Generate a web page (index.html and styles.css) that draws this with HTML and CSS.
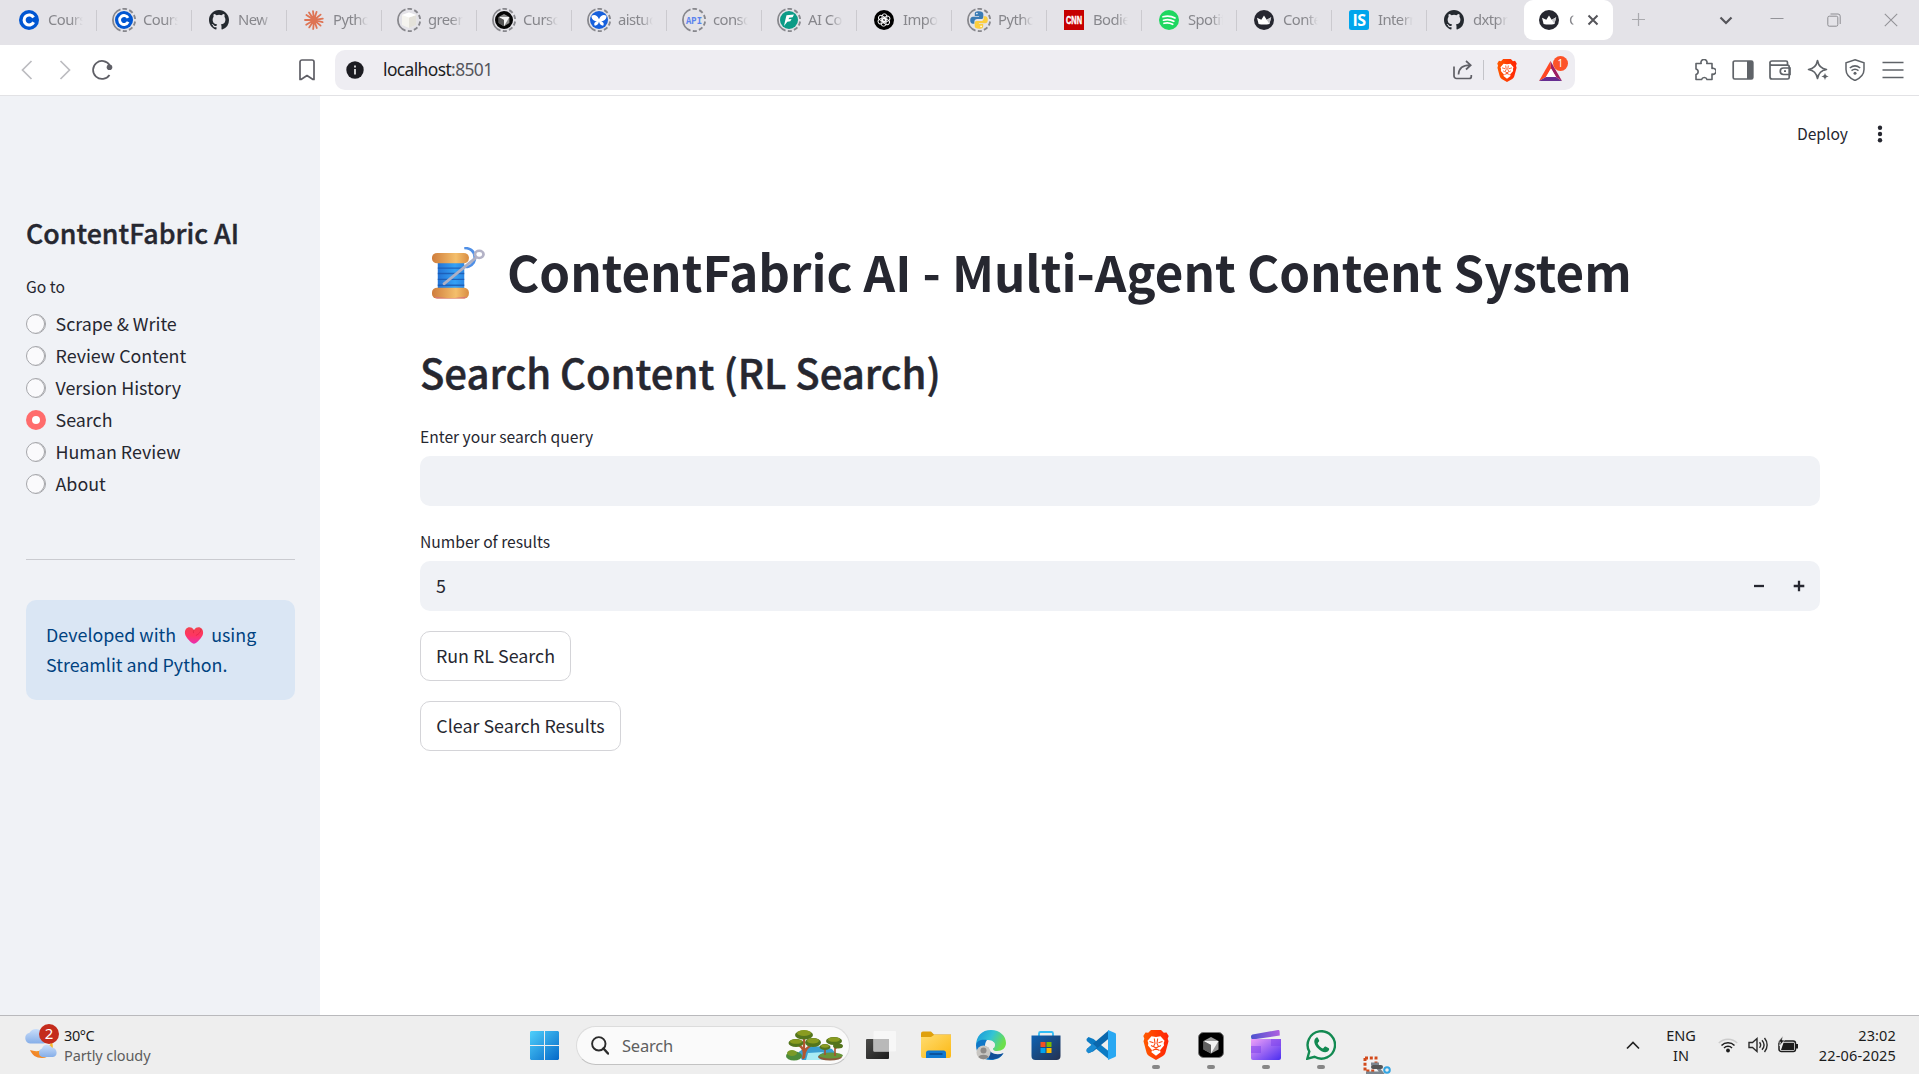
FILE: index.html
```html
<!DOCTYPE html>
<html lang="en">
<head>
<meta charset="utf-8">
<title>ContentFabric AI</title>
<link rel="stylesheet" href="styles.css">
</head>
<body>
<svg class="defs" width="0" height="0" aria-hidden="true">
  <defs>
    <linearGradient id="gWin" x1="0" y1="0" x2="1" y2="1"><stop offset="0" stop-color="#4fd0fb"/><stop offset="1" stop-color="#0568c8"/></linearGradient>
    <linearGradient id="gFold" x1="0" y1="0" x2="1" y2="1"><stop offset="0" stop-color="#ffdc70"/><stop offset="1" stop-color="#fcb813"/></linearGradient>
    <linearGradient id="gDark" x1="0" y1="0" x2="1" y2="1"><stop offset="0" stop-color="#4b4b49"/><stop offset="1" stop-color="#1d1d1d"/></linearGradient>
    <linearGradient id="gEdge" x1="0" y1="0" x2="1" y2=".4"><stop offset="0" stop-color="#1693dc"/><stop offset=".55" stop-color="#34c4d4"/><stop offset="1" stop-color="#6cdf4c"/></linearGradient>
    <linearGradient id="gStore" x1="0" y1="0" x2="1" y2="1"><stop offset="0" stop-color="#0d62b4"/><stop offset="1" stop-color="#253150"/></linearGradient>
    <linearGradient id="gBrave" x1="0" y1="0" x2="1" y2="0"><stop offset="0" stop-color="#ff5a00"/><stop offset="1" stop-color="#ff2306"/></linearGradient>
    <linearGradient id="gClip" x1="0" y1="0" x2="1" y2="1"><stop offset="0" stop-color="#efa0f8"/><stop offset="1" stop-color="#4a2ef0"/></linearGradient>
    <linearGradient id="gClipTop" x1="0" y1="0" x2="1" y2="0"><stop offset="0" stop-color="#4b52cf"/><stop offset="1" stop-color="#b060e0"/></linearGradient>
    <linearGradient id="gWood" x1="0" y1="0" x2="1" y2="0"><stop offset="0" stop-color="#cf7d3c"/><stop offset=".65" stop-color="#f4bf6c"/><stop offset="1" stop-color="#d98d42"/></linearGradient>
    <linearGradient id="gThread" x1="0" y1="0" x2="1" y2="0"><stop offset="0" stop-color="#2373d6"/><stop offset=".65" stop-color="#35a2f5"/><stop offset="1" stop-color="#2b86e4"/></linearGradient>
    <linearGradient id="gHeart" x1=".5" y1="0" x2=".5" y2="1"><stop offset="0" stop-color="#f2434f"/><stop offset=".5" stop-color="#ff3562"/><stop offset="1" stop-color="#e82fb5"/></linearGradient>
    <linearGradient id="gCloud" x1="0" y1="0" x2="0" y2="1"><stop offset="0" stop-color="#c9defa"/><stop offset="1" stop-color="#86aee8"/></linearGradient>
    <linearGradient id="gMoon" x1="1" y1="0" x2="0" y2="1"><stop offset="0" stop-color="#fbc32a"/><stop offset="1" stop-color="#ee7427"/></linearGradient>
  </defs>
  <symbol id="ring" viewBox="0 0 24 24"><g fill="none" stroke="#88888d" stroke-width="1.8"><path d="M8.5 22.6A11.2 11.2 0 0 1 8.5 1.4"/><path d="M10.5 .9a11.2 11.2 0 0 1 4.500 .3M17.2 2.100a11.2 11.2 0 0 1 3.400 2.800M21.900 7a11.200 11.200 0 0 1 1.200 4M23.100 13.500a11.200 11.200 0 0 1-1.400 4M20.400 19.300a11.200 11.200 0 0 1-3.500 2.600M14.800 22.800a11.200 11.200 0 0 1-4 .2"/></g></symbol>
  <symbol id="coursera" viewBox="0 0 20 20"><circle cx="10" cy="10" r="10" fill="#0056d2"/><path d="M14.6 12.2A5 5 0 1 1 14.5 7.6" fill="none" stroke="#fff" stroke-width="3.1"/></symbol>
  <symbol id="github" viewBox="0 0 16 16"><path fill="#24292f" d="M8 0C3.58 0 0 3.58 0 8c0 3.54 2.29 6.53 5.47 7.59.4.07.55-.17.55-.38 0-.19-.01-.82-.01-1.49-2.01.37-2.53-.49-2.69-.94-.09-.23-.48-.94-.82-1.13-.28-.15-.68-.52-.01-.53.63-.01 1.08.58 1.23.82.72 1.21 1.87.87 2.33.66.07-.52.28-.87.51-1.07-1.78-.2-3.64-.89-3.64-3.95 0-.87.31-1.59.82-2.15-.08-.2-.36-1.02.08-2.12 0 0 .67-.21 2.2.82a7.6 7.6 0 0 1 4 0c1.53-1.04 2.2-.82 2.2-.82.44 1.1.16 1.92.08 2.12.51.56.82 1.27.82 2.15 0 3.07-1.87 3.75-3.65 3.95.29.25.54.73.54 1.48 0 1.07-.01 1.93-.01 2.2 0 .21.15.46.55.38A8 8 0 0 0 16 8c0-4.42-3.58-8-8-8z"/></symbol>
  <symbol id="claude" viewBox="0 0 20 20"><g stroke="#de7454" stroke-width="1.8" stroke-linecap="round"><path d="M10 10 9 1.2M10 10l2.6-8.2M10 10l6.6-5.4M10 10l8.8-1.4M10 10l8.6 2.2M10 10l6.6 5.6M10 10l2.8 8M10 10 9.2 19M10 10l-4.8 7.4M10 10l-7.8 4.8M10 10 1 10M10 10 2.4 5M10 10 5 2.4"/></g></symbol>
  <symbol id="cube" viewBox="0 0 20 20"><path d="m3 5 7-2.6L17.2 5v10L10 18 3 15z" fill="#f5f4ef"/><path d="m10 7.6 7.2-2.6v10L10 18z" fill="#e4e2da"/><path d="m3 5 7-2.6L17.2 5 10 7.6z" fill="#fff"/></symbol>
  <symbol id="cursor" viewBox="0 0 20 20"><circle cx="10" cy="10" r="9" fill="#050505"/><path d="m10 4 5.4 2.9v6.2L10 16.2l-5.4-3.1V6.900z" fill="#8c8c8c"/><path d="M4.600 6.900h10.800L10 16.200v-6.100z" fill="#f4f4f4"/><path d="m4.600 6.900 5.400 3.200v6.100l-5.400-3.100z" fill="#555"/></symbol>
  <symbol id="aistu" viewBox="0 0 20 20"><circle cx="10" cy="10" r="9" fill="#1660dc"/><path d="M2.500 6.200c2-2.200 5.600-1.600 7.500 3 1.900-4.600 5.500-5.200 7.500-3-.2 3.200-2.600 5-5.700 5 2.600.6 3.800 2.600 2.300 4.600-2.200-.2-3.600-1.700-4.100-4.200-.5 2.500-1.900 4-4.100 4.200-1.500-2-.3-4 2.300-4.600-3.100 0-5.500-1.800-5.700-5z" fill="#fff"/></symbol>
  <symbol id="aico" viewBox="0 0 20 20"><circle cx="10" cy="10" r="9" fill="#0b9b86"/><path d="M7.500 5.300 15 4.500l-1.400 2.700-3.500.5-.5 1.500 3-.3-1.300 2.400-3 .5L5 16l1.200-5.400z" fill="#fff"/></symbol>
  <symbol id="gpt" viewBox="0 0 20 20"><circle cx="10" cy="10" r="10" fill="#000"/><g fill="none" stroke="#fff" stroke-width=".9"><rect x="8" y="3.800" width="4.800" height="7.600" rx="2.400"/><rect x="8" y="3.800" width="4.800" height="7.600" rx="2.400" transform="rotate(60 10 10)"/><rect x="8" y="3.800" width="4.800" height="7.600" rx="2.400" transform="rotate(120 10 10)"/><rect x="8" y="3.800" width="4.800" height="7.600" rx="2.400" transform="rotate(180 10 10)"/><rect x="8" y="3.800" width="4.800" height="7.600" rx="2.400" transform="rotate(240 10 10)"/><rect x="8" y="3.800" width="4.800" height="7.600" rx="2.400" transform="rotate(300 10 10)"/></g></symbol>
  <symbol id="python" viewBox="0 0 20 20"><path d="M9.800 1.200c-3.600 0-4 1.300-4 2.800v2h4.300v.7H4C2.200 6.700 1.200 8 1.200 10.300s1 3.500 2.600 3.500h1.600v-2.200c0-1.600 1.200-2.600 2.700-2.600h4.200c1.200 0 2-.9 2-2.100V4c0-1.700-1.400-2.800-4.500-2.800z" fill="#3b7bb4"/><path d="M10.200 18.800c3.600 0 4-1.300 4-2.800v-2H9.900v-.7H16c1.800 0 2.800-1.300 2.800-3.600s-1-3.500-2.600-3.500h-1.600v2.200c0 1.600-1.200 2.600-2.700 2.600H7.700c-1.200 0-2 .9-2 2.100V16c0 1.700 1.400 2.800 4.500 2.800z" fill="#fcce3e"/><circle cx="7.900" cy="3.600" r=".8" fill="#fff"/><circle cx="12.100" cy="16.400" r=".8" fill="#fff"/></symbol>
  <symbol id="spotify" viewBox="0 0 20 20"><circle cx="10" cy="10" r="10" fill="#1ed760"/><path d="M4 6.800c4.200-1.100 8.400-.7 12 1.300M4.500 10.200c3.700-1 7.200-.6 10.300 1.100M5 13.300c3-.8 6-.5 8.700 1" fill="none" stroke="#fff" stroke-linecap="round" stroke-width="1.700"/></symbol>
  <symbol id="crown" viewBox="0 0 20 20"><circle cx="10" cy="10" r="10" fill="#262730"/><path d="m3 7.800 4.300 1.900L10 5.600l2.700 4.100L17.200 7.200l-1.800 6.700c-3 .8-7.800.8-10.800 0z" fill="#fff"/><path d="m10 5.600 2.700 4.100 4.500-2.500-1.800 6.700z" fill="#c5c5c9"/></symbol>
  <symbol id="brave" viewBox="0 0 26 30"><path d="m8 0h10l2.800 2.800 2.700-.4 2.200 3.600-1 2.700.8 2.600-3 11.200c-.4 1.500-1.300 2.700-2.600 3.500L13 30l-6.900-4c-1.300-.8-2.200-2-2.600-3.500L.5 11.300l.8-2.600-1-2.700 2.200-3.600 2.700.4z" fill="url(#gBrave)"/><path d="m8.500 6.200 4.500.8 4.500-.8 4 4.500-.8 2.300 .3 2.500-4 4.800.6 2-4.600 3.400-4.600-3.400.6-2-4-4.800.3-2.500-.8-2.300z" fill="#fff"/><path d="m6.500 11.500 4 1.200M19.500 11.500l-4 1.200M11.300 8.500l.7 5-1.500 3L13 18l2.500-1.500-1.500-3 .7-5M8 15.500l2 1M18 15.500l-2 1M9.500 20.500 13 18.700l3.500 1.800M13 18v2" fill="none" stroke="#fb4a14" stroke-width="1.100"/></symbol>
</svg>

<header class="tabstrip">
  <div class="tab"><span class="fav"><svg class="ico"><use href="#coursera"/></svg></span><span class="tab-text">Cours</span></div>
  <div class="tab"><span class="fav"><svg class="ring"><use href="#ring"/></svg><svg class="ico small"><use href="#coursera"/></svg></span><span class="tab-text">Cours</span></div>
  <div class="tab"><span class="fav"><svg class="ico"><use href="#github"/></svg></span><span class="tab-text">New</span></div>
  <div class="tab"><span class="fav"><svg class="ico"><use href="#claude"/></svg></span><span class="tab-text">Pytho</span></div>
  <div class="tab"><span class="fav"><svg class="ring"><use href="#ring"/></svg><svg class="ico"><use href="#cube"/></svg></span><span class="tab-text">green</span></div>
  <div class="tab"><span class="fav"><svg class="ring"><use href="#ring"/></svg><svg class="ico"><use href="#cursor"/></svg></span><span class="tab-text">Curso</span></div>
  <div class="tab"><span class="fav"><svg class="ring"><use href="#ring"/></svg><svg class="ico"><use href="#aistu"/></svg></span><span class="tab-text">aistuc</span></div>
  <div class="tab"><span class="fav"><svg class="ring"><use href="#ring"/></svg><svg class="ico" viewBox="0 0 20 20"><text x="10" y="14" class="api-text" text-anchor="middle" textLength="16" lengthAdjust="spacingAndGlyphs">API</text></svg></span><span class="tab-text">conso</span></div>
  <div class="tab"><span class="fav"><svg class="ring"><use href="#ring"/></svg><svg class="ico"><use href="#aico"/></svg></span><span class="tab-text">AI Co</span></div>
  <div class="tab"><span class="fav"><svg class="ico"><use href="#gpt"/></svg></span><span class="tab-text">Impo</span></div>
  <div class="tab"><span class="fav"><svg class="ring"><use href="#ring"/></svg><svg class="ico"><use href="#python"/></svg></span><span class="tab-text">Pytho</span></div>
  <div class="tab"><span class="fav"><svg class="ico" viewBox="0 0 20 20"><path d="M0 0h20v20H0z" fill="#c60000"/><text x="10" y="13.700" text-anchor="middle" class="cnn-text" textLength="16" lengthAdjust="spacingAndGlyphs">CNN</text></svg></span><span class="tab-text">Bodie</span></div>
  <div class="tab"><span class="fav"><svg class="ico"><use href="#spotify"/></svg></span><span class="tab-text">Spotif</span></div>
  <div class="tab"><span class="fav"><svg class="ico"><use href="#crown"/></svg></span><span class="tab-text">Conte</span></div>
  <div class="tab"><span class="fav"><svg class="ico" viewBox="0 0 20 20"><rect width="20" height="20" rx="2.500" fill="#00a5ec"/><text x="10" y="15.600" text-anchor="middle" class="is-text">IS</text></svg></span><span class="tab-text">Intern</span></div>
  <div class="tab last"><span class="fav"><svg class="ico"><use href="#github"/></svg></span><span class="tab-text">dxtpr</span></div>
  <div class="tab active"><span class="fav"><svg class="ico"><use href="#crown"/></svg></span><span class="tab-text">C</span><svg class="close" viewBox="0 0 12 12"><path d="m1.500 1.500 9 9m0-9-9 9" stroke="#55555a" stroke-width="2"/></svg></div>
  <svg class="plus" viewBox="0 0 14 14"><path d="M7 0v14M0 7h14" stroke="#aaaaae" stroke-width="1.300"/></svg>
  <div class="winctl">
    <svg width="14" height="9" viewBox="0 0 14 9"><path d="m1.500 1.500 5.500 5.500 5.500-5.500" fill="none" stroke="#55555a" stroke-width="2.200"/></svg>
    <svg width="14" height="14" viewBox="0 0 14 14"><path d="M.5 5.500h13" stroke="#939398"/></svg>
    <svg width="14" height="14" viewBox="0 0 14 14"><g fill="none" stroke="#8d8d92"><rect x=".8" y="3.200" width="10" height="10" rx="1.500"/><path d="M3.500 1h7.500a2.200 2.200 0 0 1 2.200 2.200V11"/></g></svg>
    <svg width="14" height="14" viewBox="0 0 14 14"><path d="m.8.8 12.400 12.400m0-12.400L.8 13.200" stroke="#939398" stroke-width="1.100"/></svg>
  </div>
</header>

<nav class="toolbar">
  <svg class="back" width="12" height="20" viewBox="0 0 12 20"><path d="M10.500 1 1.500 10l9 9" fill="none" stroke="#bcbcc0" stroke-width="1.700"/></svg>
  <svg class="fwd" width="12" height="20" viewBox="0 0 12 20"><path d="m1.500 1 9 9-9 9" fill="none" stroke="#bcbcc0" stroke-width="1.700"/></svg>
  <svg class="reload" width="22" height="22" viewBox="0 0 22 22"><path d="M18.700 6.200A9 9 0 1 0 18.500 16" fill="none" stroke="#5f5f66" stroke-width="1.700"/><circle cx="18.500" cy="8.200" r="2.800" fill="#5f5f66"/></svg>
  <svg class="bookmark" width="16" height="22" viewBox="0 0 16 22"><path d="M3 1h10a2 2 0 0 1 2 2v17.500h-1L8 16.500l-6 4H1V3a2 2 0 0 1 2-2z" fill="none" stroke="#5f5f66" stroke-width="1.700" stroke-linejoin="round"/></svg>
  <div class="url">
    <svg width="18" height="18" viewBox="0 0 18 18"><circle cx="9" cy="9" r="8.700" fill="#1c1c22"/><path d="M9 8v5.500M9 4.500v2" stroke="#eee" stroke-width="1.700"/></svg>
    <span class="address">localhost<span>:8501</span></span>
    <svg class="share" width="20" height="20" viewBox="0 0 20 20"><path d="M1 6.500V16a2.500 2.500 0 0 0 2.500 2.500h12.800a2 2 0 0 0 2-2V15M5.500 14.500C5.800 8.600 9.500 5.200 17 5.200M13 1l4.700 4.200L13 9.500" fill="none" stroke="#5f5f66" stroke-width="1.700"/></svg>
    <i class="bar"></i>
    <svg class="lion" width="20" height="23"><use href="#brave"/></svg>
    <svg class="bat" width="30" height="26" viewBox="0 0 30 26"><path d="M11.500 5 0 25l7-4 5-8.500z" fill="#ff4724"/><path d="M0 25h23l-6-4H7z" fill="#662d91"/><path d="M11.500 5 23 25l-6-4-5-8.500z" fill="#9e1f63"/><path d="m12 12.500-5 8.500h10z" fill="#fff"/><circle cx="21.500" cy="7.500" r="7.500" fill="#fd5228"/><text x="21.300" y="11" text-anchor="middle" class="badge-num">1</text></svg>
  </div>
  <div class="tools">
    <svg viewBox="0 0 22 22"><path d="M2 4.500h5.200a3 3 0 1 1 5.600 0H18v5a3 3 0 1 1 0 5.600v5.400h-5a2.800 2.800 0 0 0-5.400 0H2v-5a2.900 2.900 0 0 0 0-5.600z" fill="none" stroke="#5f6368" stroke-width="1.600" stroke-linejoin="round"/></svg>
    <svg viewBox="0 0 22 22"><rect x="1.200" y="2" width="19.600" height="18" rx="1.500" fill="none" stroke="#5f6368" stroke-width="1.700"/><path d="M15 2h6v18h-6z" fill="#5f6368"/></svg>
    <svg viewBox="0 0 22 22"><g fill="none" stroke="#5f6368" stroke-width="1.700"><path d="M18.500 6V3.500A1.500 1.500 0 0 0 17 2H3a2 2 0 0 0 0 4.200h15.500c1 0 1.700.7 1.700 1.700v10.600c0 1-.7 1.500-1.700 1.500H3a2 2 0 0 1-2-2V4"/><path d="M21 9h-6.500a3.200 3.200 0 0 0 0 6.500H21zM15 12.200h2"/></g></svg>
    <svg viewBox="0 0 22 22"><path d="M10.500 1.500c1 5.500 3.500 8.200 9 9-5.500.8-8 3.500-9 9-1-5.500-3.500-8.200-9-9 5.500-.8 8-3.500 9-9z" fill="none" stroke="#5f6368" stroke-width="1.600" stroke-linejoin="round"/><path d="M18 12.500v10M13 17.500h10" stroke="#fff" stroke-width="4"/><path d="M18 13.800c.4 2.300 1.300 3.300 3.700 3.700-2.400.4-3.300 1.300-3.700 3.700-.4-2.400-1.300-3.300-3.700-3.700 2.400-.4 3.300-1.400 3.700-3.700z" fill="#5f6368"/></svg>
    <svg viewBox="0 0 22 22"><g fill="none" stroke="#5f6368" stroke-width="1.500"><path d="m11 .8 9 3v6.700c0 4.700-3 8.300-9 11-6-2.700-9-6.300-9-11V3.800z"/><path d="M5.800 9c3.200-2.600 7.200-2.600 10.400 0M7.500 11.600c2.300-1.800 4.700-1.800 7 0"/></g><circle cx="11" cy="14.300" r="1.500" fill="#5f6368"/></svg>
    <svg viewBox="0 0 22 22"><path d="M.5 3.500h21M.5 11h21M.5 18.500h21" stroke="#5f6368" stroke-width="1.700"/></svg>
  </div>
</nav>

<div class="page">
  <aside class="sidebar">
    <h2 class="side-title">ContentFabric AI</h2>
    <div class="goto">Go to</div>
    <div class="radios">
      <label><i></i><span>Scrape &amp; Write</span></label>
      <label><i></i><span>Review Content</span></label>
      <label><i></i><span>Version History</span></label>
      <label class="on"><i></i><span>Search</span></label>
      <label><i></i><span>Human Review</span></label>
      <label><i></i><span>About</span></label>
    </div>
    <hr>
    <div class="info">
      <div>Developed with <svg class="heart" viewBox="0 0 20 18"><path d="M10 3.200C8 0 5 0 3.200.8.500 2 0 5.200.6 7.600c.8 3.200 4.400 7 7.400 9.400 1.500 1.100 2.500 1.100 4 0 3-2.400 6.600-6.200 7.400-9.400C20 5.200 19.500 2 16.800.8 15 0 12 0 10 3.200z" fill="url(#gHeart)"/><path d="M10 3.200c-.6 1.200-.7 2-.5 3.300M17 2c1 2-1 5-5 7" fill="none" stroke="#d3203e" stroke-width="1" opacity=".6"/></svg> using</div>
      <div>Streamlit and Python.</div>
    </div>
  </aside>
  <main class="main">
    <div class="appbar"><span>Deploy</span><svg width="6" height="18" viewBox="0 0 6 18"><g fill="#262730"><circle cx="3" cy="2.700" r="2.200"/><circle cx="3" cy="9" r="2.200"/><circle cx="3" cy="15.300" r="2.200"/></g></svg></div>
    <h1 class="title"><svg class="spool" viewBox="0 0 46 53" preserveAspectRatio="none"><path d="M28 1c8 0 11 8 8 15-2 4-6 5-9 4" fill="none" stroke="#4f8fe6" stroke-width="2.600"/><path d="M5 13h23v32H5z" fill="url(#gThread)"/><path d="M5 21.500h23M5 27h23M5 33h23M5 39h23" stroke="#1c57ae" stroke-width="1.400" opacity=".8"/><rect x="0" y="6" width="32" height="10.500" rx="4.500" fill="url(#gWood)"/><rect x="0" y="41.500" width="32" height="11" rx="4.500" fill="url(#gWood)"/><path d="M2 50.500c8 2 20 2 28 0l-1.500 2H4z" fill="#d9777a"/><path d="m10.500 37.500 27-26" stroke="#aeb0c4" stroke-width="2.600" stroke-linecap="round"/><circle cx="41" cy="7.500" r="3.700" fill="none" stroke="#b3b2c6" stroke-width="2.400"/></svg><span>ContentFabric AI - Multi-Agent Content System</span></h1>
    <h2 class="subtitle">Search Content (RL Search)</h2>
    <div class="lbl q">Enter your search query</div>
    <div class="field"></div>
    <div class="lbl n">Number of results</div>
    <div class="field num"><span>5</span><svg width="12" height="12" viewBox="0 0 12 12"><path d="M1 6h10" stroke="#262730" stroke-width="2.300"/></svg><svg width="12" height="12" viewBox="0 0 12 12"><path d="M.7 6h10.600M6 .7v10.600" stroke="#262730" stroke-width="2.300"/></svg></div>
    <div class="btn run"><span>Run RL Search</span></div>
    <div class="btn clear"><span>Clear Search Results</span></div>
  </main>
</div>

<footer class="taskbar">
  <div class="weather">
    <svg width="36" height="36" viewBox="0 0 36 36"><path d="M5 19.500a5.500 5.500 0 0 1-.5-10.800 7.500 7.500 0 0 1 13.500 1c5 1 5 9.800 0 9.800z" fill="url(#gCloud)"/><path d="M27 18c3 8-2 16-10 16-6 0-10-3-12-8 8 3 17 0 22-8z" fill="url(#gMoon)"/><path d="M17 33a4.500 4.500 0 0 1 0-8.500 5.500 5.500 0 0 1 10-1c6 .5 6 9.500 1 9.500z" fill="url(#gCloud)"/><circle cx="24" cy="10" r="10" fill="#c42b1c"/><text x="24" y="15.300" text-anchor="middle" class="two">2</text></svg>
    <div class="wtext"><span class="deg">30°C</span><span class="cond">Partly cloudy</span></div>
  </div>
  <div class="center">
    <svg class="start" width="29" height="29" viewBox="0 0 29 29"><path d="M1 0h13v14H0V1zM15 0h13l1 1v13H15zM0 15h14v14H1l-1-1zM15 15h14v13l-1 1H15z" fill="url(#gWin)"/></svg>
    <div class="search">
      <svg class="lens" width="18" height="19" viewBox="0 0 18 19"><circle cx="7.800" cy="7.800" r="6.700" fill="none" stroke="#2b2b2b" stroke-width="1.900"/><path d="m12.500 12.500 4.500 5" stroke="#2b2b2b" stroke-width="2.400" stroke-linecap="round"/></svg>
      <span>Search</span>
      <svg class="trees" width="57" height="32" viewBox="0 0 57 32"><path d="M12 24c8-8 20-8 34-4l6 7-8 4H16z" fill="#3b9fd0"/><path d="m22 24 16-1-6 4 6 4H20z" fill="#a8ecf4"/><ellipse cx="8" cy="27" rx="8" ry="4.500" fill="#4b8b3b"/><ellipse cx="6" cy="24" rx="5" ry="3" fill="#7a9a28"/><ellipse cx="44" cy="28" rx="12" ry="3.500" fill="#8c5a3a"/><ellipse cx="45" cy="26.500" rx="12" ry="3" fill="#67953a"/><path d="M17 30c2-7 1-10-5-15M18 29c0-8 3-11 11-15M18 22V9" fill="none" stroke="#b3562f" stroke-width="2.300"/><path d="M39 26V17M49 27V12M49 20l5-5" fill="none" stroke="#a8502d" stroke-width="1.600"/><g fill="#54751d"><ellipse cx="18" cy="6" rx="9" ry="4.500"/><ellipse cx="10" cy="14" rx="7.500" ry="4"/><ellipse cx="27" cy="13.500" rx="8" ry="4.500"/><ellipse cx="39" cy="18" rx="5.500" ry="3"/><ellipse cx="48" cy="12" rx="8" ry="4"/><ellipse cx="52" cy="17" rx="5" ry="2.500"/></g><g fill="#899b20"><ellipse cx="18" cy="4" rx="7" ry="3"/><ellipse cx="10" cy="12.500" rx="6" ry="2.300"/><ellipse cx="27" cy="11.800" rx="6" ry="2.600"/><ellipse cx="48" cy="10.500" rx="6" ry="2.300"/><ellipse cx="39" cy="17" rx="4" ry="1.700"/></g></svg>
    </div>
    <div class="apps">
      <span><svg width="30" height="30" viewBox="0 0 30 30"><rect x="0" y="9" width="23" height="20" rx="1" fill="url(#gDark)"/><rect x="7.500" y="1" width="22.500" height="20.500" rx="1" fill="#f7f7f7" opacity=".92"/><path d="M7.500 9H23v12.500H7.500z" fill="#b9b9b9"/></svg></span>
      <span><svg width="30" height="30" viewBox="0 0 30 30"><path d="M0 3.500a2 2 0 0 1 2-2h8l3 3h17V12H0z" fill="#dfa00d"/><path d="M0 7h10l3-2h17v21a2 2 0 0 1-2 2H2a2 2 0 0 1-2-2z" fill="url(#gFold)"/><path d="M5 28v-5a2.500 2.500 0 0 1 2.500-2.500h15A2.500 2.500 0 0 1 25 23v5z" fill="#1078d0"/><path d="M8.500 24h13" stroke="#073f80" stroke-width="1.300"/></svg></span>
      <span><svg width="30" height="30" viewBox="0 0 30 30"><path d="M0 16C0 6 6 0 15 0s15 6 15 13c0 5-4 8-9 8-4 0-5-2-3-5 1-3-1-6-6-6C6 10 1 12 0 16z" fill="url(#gEdge)"/><path d="M0 15c1-5 6-6 11-5-3 4-3 10 2 14s11 3 14.500-1C25 28 20 30 15 30 6 30 0 24 0 15z" fill="#0f77c7"/><path d="M12 17c1 6 8 9 15.500 6-3 5-9 7-14 6-3-3-3-8-1.500-12z" fill="#104f98"/><circle cx="15.500" cy="15" r="3.500" fill="#ededed"/><circle cx="7.500" cy="22.500" r="7" fill="#c8c6c2"/><circle cx="7.500" cy="20.500" r="3" fill="#8d8a88"/><path d="M2.500 27c1-3 9-3 10 0-3 3-7 3-10 0z" fill="#8d8a88"/></svg></span>
      <span><svg width="30" height="30" viewBox="0 0 30 30"><path d="M8 6V3.500A1.500 1.500 0 0 1 9.500 2h11A1.500 1.500 0 0 1 22 3.500V6" fill="none" stroke="#31bdf6" stroke-width="1.800"/><path d="M.5 5.500h29V26a4 4 0 0 1-4 4h-21a4 4 0 0 1-4-4z" fill="url(#gStore)"/><path d="M9.500 12h5v5h-5z" fill="#f25022"/><path d="M15.500 12h5v5h-5z" fill="#7fba00"/><path d="M9.500 18h5v5h-5z" fill="#00a4ef"/><path d="M15.500 18h5v5h-5z" fill="#ffb900"/></svg></span>
      <span><svg width="30" height="30" viewBox="0 0 30 30"><path d="m.5 9 2-2 5 2L22.500 21v8L.8 11z" fill="#0c7bc4"/><path d="m.5 21 2 2.300 5-2L22.500 8.800V.5L.8 19z" fill="#0a67ad"/><path d="m.8 19 6-5.200 4 3.500-4 4-4.300 2-2-1.800z" fill="#1a8bd3"/><path d="M22 0l7 3c.6.300 1 .8 1 1.500v21c0 .7-.4 1.200-1 1.500l-7 3z" fill="#29a8f2"/></svg></span>
      <span class="run-dot"><svg width="26" height="30"><use href="#brave"/></svg></span>
      <span class="run-dot"><svg width="26" height="26" viewBox="0 0 26 26"><rect x=".5" y=".5" width="25" height="25" rx="5" fill="#000" stroke="#777"/><path d="m13 5 7.500 4v8.500L13 21.500l-7.500-4V9z" fill="#9b9b9b"/><path d="M5.500 9h15L13 21.500V13z" fill="#f5f5f5"/><path d="M5.500 9 13 13v8.500l-7.500-4z" fill="#606060"/></svg></span>
      <span class="run-dot"><svg width="30" height="30" viewBox="0 0 30 30"><path d="M0 6.500A2 2 0 0 1 1.500 4.500L27 0c1 0 1.500.4 1.600 1.500l.2 4L1.500 9.500C.5 9 0 8 0 6.500z" fill="url(#gClipTop)"/><path d="M0 9h30v19a2 2 0 0 1-2 2H2a2 2 0 0 1-2-2z" fill="url(#gClip)"/><path d="M0 16h10v7H0zM20 9h10v7H20z" fill="#7b40ea" opacity=".5"/></svg></span>
      <span class="run-dot"><svg width="30" height="30" viewBox="0 0 30 30"><path d="m1.300 28.700 2-7.200A13.700 13.700 0 1 1 8.500 26.800z" fill="#f2f2f2" stroke="#138a52" stroke-width="2.400"/><path d="M10.500 7.500c-4 2.500-2 7.500 1.500 11s8.500 5.500 11 1.500c.5-1 0-1.600-.6-2l-2.800-1.400c-1.200-.5-1.500 1.500-2.700 1.800-2-.5-4.500-3-5.200-5 .2-1.200 1.800-1.600 1.500-2.800l-1.300-2.700c-.4-.6-.9-.7-1.400-.4z" fill="#138a52"/></svg></span>
      <span class="snip"><svg width="30" height="18" viewBox="0 0 30 18"><path d="M2 1h14v14H2z" fill="#f2f2f3"/><path d="M3 2h11v6M3 2v13h10" fill="none" stroke="#d24a1b" stroke-width="3" stroke-dasharray="3 1.800"/><path d="M9 8h8M4 17h16l-5-6" stroke="#7c858e" stroke-width="3" fill="none"/><circle cx="25" cy="14" r="2.800" fill="none" stroke="#32a4e2" stroke-width="2"/></svg><i></i></span>
    </div>
  </div>
  <div class="tray">
    <svg class="up" width="14" height="9" viewBox="0 0 14 9"><path d="M1 7.500 7 1.500l6 6" fill="none" stroke="#222" stroke-width="1.700"/></svg>
    <div class="lang"><span>ENG</span><span>IN</span></div>
    <svg class="wifi" width="20" height="16" viewBox="0 0 20 16"><g fill="none" stroke-width="1.500"><path d="M.8 6a13 13 0 0 1 18.400 0" stroke="#ccc"/><path d="M3.500 8.500a9.200 9.200 0 0 1 13 0M6 11a5.700 5.700 0 0 1 8 0" stroke="#1d1d1d"/></g><circle cx="10" cy="13.500" r="1.900" fill="#1d1d1d"/></svg>
    <svg class="vol" width="20" height="18" viewBox="0 0 20 18"><g fill="none" stroke="#2a2a2a" stroke-width="1.400"><path d="M1 6.500v5h3.500l4.500 4V2.500l-4.500 4zM11.500 6.200c1.500 1.800 1.500 3.800 0 5.600M14 4.200c2.600 3 2.600 6.600 0 9.600M16.500 2c3.500 4.200 3.500 9.800 0 14"/></g></svg>
    <svg class="batt" width="20" height="18" viewBox="0 0 20 18"><rect x="1" y="5" width="16.500" height="10.500" rx="2.300" fill="#eee" stroke="#1c1c1c" stroke-width="1.500"/><path d="M3 14 5.500 6.700h10.500v7.300zM18 8h2v4.500H18z" fill="#1c1c1c"/><path d="M5 0 0 6h2.500L1.500 10l5-6H4z" fill="#1c1c1c" stroke="#ededed" stroke-width=".6"/></svg>
    <div class="clock"><span>23:02</span><span>22-06-2025</span></div>
  </div>
</footer>
</body>
</html>
```
FILE: styles.css
```css
* { box-sizing: border-box; }
html, body { margin: 0; height: 100%; }
body {
  display: flex; flex-direction: column; overflow: hidden; background: #fff; color: #262730;
  font-family: "Noto Sans CJK SC", "Source Sans Pro", sans-serif;
}
svg { display: block; flex: none; }
.defs { position: absolute; }
h1, h2 { margin: 0; }
.tabstrip, .toolbar, .taskbar { font-family: "Noto Sans", "Open Sans", sans-serif; }

/* Browser tabs */
.tabstrip { height: 45px; flex: none; display: flex; background: #e4e3e8; }
.tab { width: 95px; height: 40px; flex: none; display: flex; align-items: center; padding-left: 17px; position: relative; }
.tab:not(.last):not(.active)::after { content: ""; position: absolute; left: 96px; top: 10px; width: 1px; height: 21px; background: #cbcacf; }
.fav { width: 24px; height: 24px; display: grid; place-items: center; flex: none; }
.fav > svg { grid-area: 1 / 1; }
.ring { width: 24px; height: 24px; }
.ico { width: 20px; height: 20px; }
.ico.small { width: 18px; height: 18px; }
.tab-text {
  margin-left: 7px; width: 35px; overflow: hidden; white-space: nowrap; font-size: 14.8px; line-height: 24px; letter-spacing: -.55px; color: #87878c;
  padding-bottom: 2px;
  -webkit-mask-image: linear-gradient(90deg, #000 65%, transparent); mask-image: linear-gradient(90deg, #000 65%, transparent);
}
.tab.active { width: 89px; margin-left: 4px; padding-left: 13px; background: #fff; border-radius: 9px; }
.active .tab-text { width: 5px; margin-left: 8px; }
.close { width: 12px; height: 12px; margin-left: 13px; }
.plus { width: 13px; height: 13px; margin: 13px 0 0 19px; }
.winctl { height: 40px; display: flex; align-items: center; margin-left: auto; padding-right: 21px; gap: 43px; }
.winctl svg:first-child { margin-right: -6px; }

/* Navigation bar */
.toolbar { height: 51px; flex: none; display: flex; align-items: center; border-bottom: 1px solid #e2e2e5; padding-left: 21px; }
.fwd { margin-left: 26px; }
.reload { margin-left: 20px; }
.bookmark { margin-left: 186px; }
.url { width: 1240px; height: 40px; margin-left: 20px; border-radius: 10px; background: #eeedf2; display: flex; align-items: center; padding-left: 11px; }
.address { width: 160px; margin: -2px 0 0 19px; font-size: 17.4px; letter-spacing: -.6px; color: #1c1c22; }
.address span { color: #55555c; }
.share { margin-left: auto; }
.bar { width: 1px; height: 20px; background: #c4c4c9; margin: 0 13px 0 10px; }
.bat { margin: -3px 6px 0 22px; }
.tools { margin-left: 119px; display: flex; gap: 15.5px; }
.tools svg { width: 22px; height: 22px; }

/* App page */
.page { flex: 1; display: flex; min-height: 0; }
.sidebar { width: 320px; flex: none; background: #f0f2f6; padding: 117px 25px 0 26px; font-size: 17.86px; }
.side-title { font-size: 26.8px; line-height: 40px; font-weight: 500; white-space: nowrap; -webkit-text-stroke: .4px #262730; }
.goto { font-size: 15.63px; line-height: 24px; margin-top: 22px; }
.radios { margin-top: 9px; }
.radios label { display: flex; align-items: center; height: 32px; line-height: 30px; gap: 9.5px; }
.radios span { padding-bottom: 2px; }
.radios i { width: 20px; height: 20px; border-radius: 50%; background: #fafafc; border: 1px solid #a5a6aa; box-shadow: inset -1px 0 0 #a5a6aa; }
.radios .on i { border: 6px solid #ff6c6c; background: #fff; box-shadow: none; }
.sidebar hr { height: 1px; border: 0; background: #cacbd0; margin: 59px 0 40px; }
.info { height: 100px; border-radius: 10px; background: #dae6f4; color: #004280; padding: 19px 20px; line-height: 30px; white-space: nowrap; }
.heart { display: inline-block; width: 20px; height: 17px; margin: 0 3.500px; vertical-align: -2px; }
.main { flex: 1; padding: 0 99px 0 100px; }
.appbar { height: 76px; margin-right: -63px; display: flex; justify-content: flex-end; align-items: center; gap: 29px; font-size: 15.63px; }
.appbar span { padding-bottom: 2px; }
.title { height: 66px; margin-top: 68px; padding-left: 12px; display: flex; align-items: center; gap: 23px; font-size: 49.25px; line-height: 66px; font-weight: 700; white-space: nowrap; }
.spool { width: 53px; height: 52px; }
.title span { margin: -5px 0 0 -1px; }
.subtitle { font-size: 40.1px; line-height: 54px; font-weight: 500; margin-top: 39px; white-space: nowrap; -webkit-text-stroke: .5px #262730; }
.lbl { font-size: 15.63px; line-height: 24px; }
.q { margin: 26px 0 7px; }
.n { margin: 24px 0 7px; }
.field { height: 50px; border-radius: 10px; background: #f0f2f6; }
.num { display: flex; align-items: center; padding: 0 15px 0 16px; gap: 28px; font-size: 17.86px; }
.num span { flex: 1; padding-bottom: 2px; }
.btn { height: 50px; margin-top: 20px; border: 1px solid #d4d4d8; border-radius: 10px; display: flex; align-items: center; justify-content: center; font-size: 17.86px; white-space: nowrap; }
.btn span { padding-bottom: 3px; }
.run { width: 151px; }
.clear { width: 201px; }

/* Taskbar */
.taskbar { height: 59px; flex: none; display: flex; align-items: center; background: #eee; border-top: 1px solid #b9b9bc; color: #1b1b1b; }
.weather { width: 530px; flex: none; padding-left: 25px; display: flex; align-items: center; gap: 3px; }
.weather svg { margin-top: -6px; }
.wtext, .lang, .clock { display: flex; flex-direction: column; font-size: 14.5px; line-height: 20px; white-space: nowrap; }
.deg { letter-spacing: -.4px; }
.cond { color: #5d5d5d; letter-spacing: -.1px; }
.center { display: flex; align-items: center; flex: none; }
.search { width: 274px; height: 39px; margin-left: 17px; border-radius: 20px; background: #fafafa; border: 1px solid #dcdcdc; border-bottom-color: #c2c2c2; display: flex; align-items: center; padding-left: 14px; }
.search span { width: 100px; margin-left: 13px; font-size: 16.5px; letter-spacing: -.2px; color: #5f5f5f; }
.trees { margin-left: 64px; }
.apps { margin-left: 3px; display: flex; }
.apps > span { width: 55px; height: 58px; display: grid; place-items: center; position: relative; }
.run-dot::after { content: ""; position: absolute; left: 24px; bottom: 5px; width: 8px; height: 4px; border-radius: 2px; background: #868686; }
.apps .snip { place-items: end; padding-right: 11px; }
.snip i { position: absolute; left: 23px; bottom: 5px; width: 12px; height: 4px; border-radius: 2px; background: #555; }
.tray { flex: 1; display: flex; align-items: center; padding-right: 23px; }
.up { margin-left: auto; }
.lang { width: 40px; margin-left: 21px; align-items: center; }
.wifi { margin-left: 17px; }
.vol, .batt { margin-left: 10px; }
.clock { width: 98px; align-items: flex-end; letter-spacing: .15px; }

.api-text { font: 700 11.5px "Liberation Mono", monospace; fill: #5b82ee; }
.cnn-text { font: 700 10px "Liberation Sans", sans-serif; fill: #fff; stroke: #fff; stroke-width: .4px; }
.is-text { font: 700 16px "Open Sans", sans-serif; fill: #fff; letter-spacing: -.5px; }
.badge-num { font: 10px "Noto Sans", sans-serif; fill: #fff; }
.two { font: 15px "Noto Sans", sans-serif; fill: #fff; }
```
